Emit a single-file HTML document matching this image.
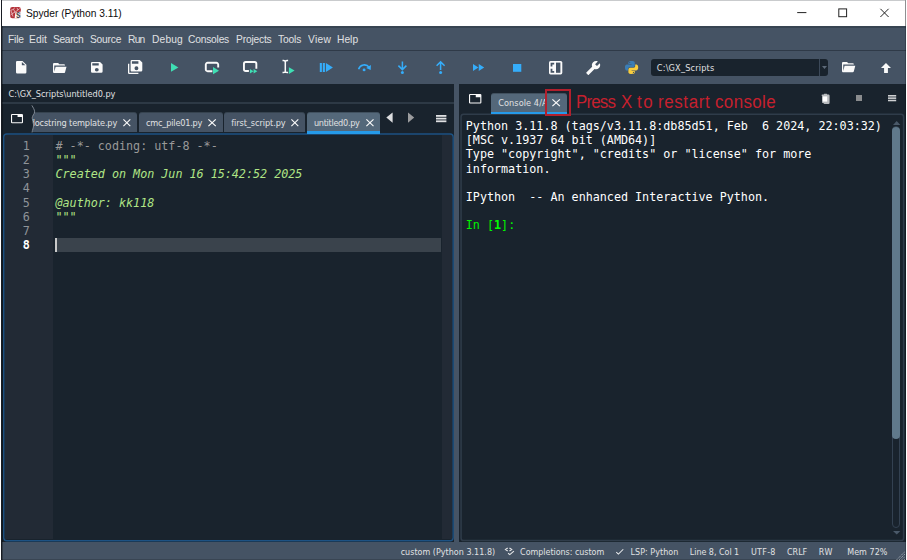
<!DOCTYPE html>
<html lang="en">
<head>
<meta charset="utf-8">
<title>Spyder (Python 3.11)</title>
<style>
*{box-sizing:border-box;margin:0;padding:0}
html,body{width:907px;height:560px;overflow:hidden;background:#19232d}
body{font-family:"Liberation Sans",sans-serif;color:#e0e1e3;font-size:11px}
#win{position:relative;width:907px;height:560px;overflow:hidden;background:#19232d}
#win div,#win svg,#win span.t{position:absolute}
#win section,#win nav,#win header,#win footer,#win main{display:block}
.t{white-space:pre}
.bg{left:0;top:0}
svg{overflow:visible}
.w{fill:#fafafa}
.g{fill:#3fdfb4}
.b{fill:#35adfa}
.tab{background:#455364;border-radius:3px 3px 0 0;border-top:1px solid #36434f;background-clip:border-box}
.tab.sel{background:#54687a;border-top-color:#41515f}
.tab.sel i{position:absolute;left:0;right:0;bottom:0;height:2.6px;background:#259ae9}
</style>
</head>
<body>
<div id="win">
<header id="titlebar">
<div style="left:0px;top:0px;width:907px;height:26px;background:#fff"></div>
<div style="left:2px;top:0px;width:903px;height:1px;background:#c9cbcd"></div>
<svg style="left:10px;top:7px;width:11px;height:11.4px" viewBox="0 0 11 11.4"><rect x="0.1" y="0.1" width="10.7" height="11.1" rx="2.2" fill="#b4323a"/><path d="M0.8 3.2L3.6 2.4L5 5.2L2 6.6ZM5 5.2L8 3M2 6.6L3 9.6M3.6 2.4L4.6 0.6M8 3L9.6 1.6M8 3L7 0.8M2 6.6L0.6 8.4" stroke="#efd0d2" stroke-width="0.75" fill="none"/><path d="M5.4 5.6L10.8 4.4V9.2Q10.8 11.2 8.6 11.2H4.6Z" fill="#fbf6f6"/></svg>
<div class="t" style='left:16.40px;top:6.70px;font:normal bold 11px/14px "Liberation Sans", sans-serif;color:#474747;transform:scaleX(0.74);transform-origin:0 0;'>s</div>
<div class="t" style='left:26.20px;top:5.90px;font:11px/14px "Liberation Sans", sans-serif;color:#0c0c0c;letter-spacing:-0.011px;transform:scaleX(0.93);transform-origin:0 0;'>Spyder (Python 3.11)</div>
<svg style="left:790px;top:4px;width:110px;height:18px" viewBox="0 0 110 18"><path d="M7.2 8.6H16.4" stroke="#222" stroke-width="1" fill="none"/><rect x="48.8" y="4.9" width="7.8" height="7.8" stroke="#222" stroke-width="1" fill="none"/><path d="M90.4 4.8L98.6 13M98.6 4.8L90.4 13" stroke="#222" stroke-width="1" fill="none"/></svg>
</header>
<nav id="menubar">
<div style="left:2px;top:26px;width:904px;height:25px;background:#455364;border-top:2px solid #374452;border-bottom:1px solid #2f3a48"></div>
<div class="t" style='left:7.70px;top:31.80px;font:11px/14px "Liberation Sans", sans-serif;color:#e0e1e3;letter-spacing:-0.170px;transform:scaleX(0.93);transform-origin:0 0;'>File</div>
<div class="t" style='left:29.40px;top:31.80px;font:11px/14px "Liberation Sans", sans-serif;color:#e0e1e3;letter-spacing:0.080px;transform:scaleX(0.93);transform-origin:0 0;'>Edit</div>
<div class="t" style='left:53.30px;top:31.80px;font:11px/14px "Liberation Sans", sans-serif;color:#e0e1e3;letter-spacing:-0.345px;transform:scaleX(0.93);transform-origin:0 0;'>Search</div>
<div class="t" style='left:90.00px;top:31.80px;font:11px/14px "Liberation Sans", sans-serif;color:#e0e1e3;letter-spacing:-0.216px;transform:scaleX(0.93);transform-origin:0 0;'>Source</div>
<div class="t" style='left:127.90px;top:31.80px;font:11px/14px "Liberation Sans", sans-serif;color:#e0e1e3;letter-spacing:-0.783px;transform:scaleX(0.93);transform-origin:0 0;'>Run</div>
<div class="t" style='left:151.50px;top:31.80px;font:11px/14px "Liberation Sans", sans-serif;color:#e0e1e3;letter-spacing:0.178px;transform:scaleX(0.93);transform-origin:0 0;'>Debug</div>
<div class="t" style='left:188.10px;top:31.80px;font:11px/14px "Liberation Sans", sans-serif;color:#e0e1e3;letter-spacing:-0.217px;transform:scaleX(0.93);transform-origin:0 0;'>Consoles</div>
<div class="t" style='left:236.00px;top:31.80px;font:11px/14px "Liberation Sans", sans-serif;color:#e0e1e3;letter-spacing:-0.187px;transform:scaleX(0.93);transform-origin:0 0;'>Projects</div>
<div class="t" style='left:278.40px;top:31.80px;font:11px/14px "Liberation Sans", sans-serif;color:#e0e1e3;letter-spacing:-0.147px;transform:scaleX(0.93);transform-origin:0 0;'>Tools</div>
<div class="t" style='left:308.10px;top:31.80px;font:11px/14px "Liberation Sans", sans-serif;color:#e0e1e3;letter-spacing:0.308px;transform:scaleX(0.93);transform-origin:0 0;'>View</div>
<div class="t" style='left:337.20px;top:31.80px;font:11px/14px "Liberation Sans", sans-serif;color:#e0e1e3;letter-spacing:0.025px;transform:scaleX(0.93);transform-origin:0 0;'>Help</div>
</nav>
<section id="toolbar">
<div style="left:2px;top:51px;width:904px;height:33px;background:#455364"></div>
<svg style="left:15.70px;top:61.30px;width:10.40px;height:12.40px" viewBox="4 2 16 20" preserveAspectRatio="none"><path class="w"  d="M13,9V3.5L18.5,9M6,2C4.89,2 4,2.89 4,4V20A2,2 0 0,0 6,22H18A2,2 0 0,0 20,20V8L14,2H6Z"/></svg>
<svg style="left:52.60px;top:62.50px;width:13.50px;height:10.10px" viewBox="2 4 21.21 16" preserveAspectRatio="none"><path class="w"  d="M19,20H4C2.89,20 2,19.1 2,18V6C2,4.89 2.89,4 4,4H10L12,6H19A2,2 0 0,1 21,8H21L4,8V18L6.14,10H23.21L20.93,18.5C20.7,19.37 19.92,20 19,20Z"/></svg>
<svg style="left:91.40px;top:62.20px;width:11.60px;height:10.70px" viewBox="3 3 18 18" preserveAspectRatio="none"><path class="w"  d="M15,9H5V5H15M12,19A3,3 0 0,1 9,16A3,3 0 0,1 12,13A3,3 0 0,1 15,16A3,3 0 0,1 12,19M17,3H5C3.89,3 3,3.9 3,5V19A2,2 0 0,0 5,21H19A2,2 0 0,0 21,19V7L17,3Z"/></svg>
<svg style="left:128.20px;top:60.20px;width:14.30px;height:14.00px" viewBox="1 1 22 22" preserveAspectRatio="none"><path class="w"  d="M17,7V3H7V7H17M14,17A3,3 0 0,0 17,14A3,3 0 0,0 14,11A3,3 0 0,0 11,14A3,3 0 0,0 14,17M19,1L23,5V17A2,2 0 0,1 21,19H7C5.89,19 5,18.1 5,17V3A2,2 0 0,1 7,1H19M1,7H3V21H17V23H3A2,2 0 0,1 1,21V7Z"/></svg>
<svg style="left:170.70px;top:63.30px;width:7.40px;height:8.80px" viewBox="8 5.14 11 14.0" preserveAspectRatio="none"><path class="g"  d="M8,5.14V19.14L19,12.14L8,5.14Z"/></svg>
<svg style="left:204px;top:61px;width:17px;height:15px" viewBox="0 0 17 15"><path d="M8.4 10.2H3.6a1.8 1.8 0 0 1-1.8-1.8V3.6a1.8 1.8 0 0 1 1.8-1.8h8.8a1.8 1.8 0 0 1 1.8 1.8V6.4" stroke="#fafafa" stroke-width="1.9" fill="none"/><path class="g" d="M9 6.1V13.2L15 9.65Z"/></svg>
<svg style="left:242px;top:60px;width:17px;height:15px" viewBox="0 0 17 15"><path d="M6.9 10.95H3.75a1.8 1.8 0 0 1-1.8-1.8V3.75a1.8 1.8 0 0 1 1.8-1.8h8.8a1.8 1.8 0 0 1 1.8 1.8V8.8" stroke="#fafafa" stroke-width="1.9" fill="none"/><path class="g" d="M7.9 8.9V13.5L11.5 11.2ZM11.6 8.9V13.5L15.3 11.2Z"/></svg>
<svg style="left:281px;top:59px;width:15px;height:16px" viewBox="0 0 15 16"><path d="M1.5 1.6H2.6Q4.3 1.6 4.3 3.2Q4.3 1.6 6 1.6H7.1M4.3 3V12.2M1.5 13.6H2.6Q4.3 13.6 4.3 12Q4.3 13.6 6 13.6H7.1" stroke="#fafafa" stroke-width="1.5" fill="none"/><path class="g" d="M7.9 8.2V15L13.6 11.6Z"/></svg>
<svg style="left:319px;top:63px;width:15px;height:9px" viewBox="0 0 15 9"><path class="b" d="M0.8 -0.1H2.9V8.9H0.8ZM3.8 -0.1H5.9V8.9H3.8ZM6.9 -0.1L13.9 4.4L6.9 8.9Z"/></svg>
<svg style="left:357px;top:62px;width:15px;height:11px" viewBox="0 0 15 11"><path d="M1.6 7.2A6 6 0 0 1 12.2 5.4" stroke="#35adfa" stroke-width="1.6" fill="none"/><path class="b" d="M13.9 3.0L13.7 8.0L9.2 6.1Z"/><circle class="b" cx="7.1" cy="7.9" r="1.45"/></svg>
<svg style="left:397px;top:60.5px;width:11px;height:14px" viewBox="0 0 11 14"><path d="M5.4 0.4V8.4M1.4 4.6L5.4 8.6L9.4 4.6" stroke="#35adfa" stroke-width="1.5" fill="none"/><circle class="b" cx="5.4" cy="11.5" r="1.5"/></svg>
<svg style="left:435px;top:60.5px;width:11px;height:14px" viewBox="0 0 11 14"><path d="M5.6 9V1.2M1.6 4.8L5.6 0.9L9.6 4.8" stroke="#35adfa" stroke-width="1.5" fill="none"/><circle class="b" cx="5.6" cy="11.5" r="1.5"/></svg>
<svg style="left:473.20px;top:64.00px;width:11.20px;height:7.10px" viewBox="4 6 17.5 12" preserveAspectRatio="none"><path class="b"  d="M13,6V18L21.5,12M4,18L12.5,12L4,6V18Z"/></svg>
<svg style="left:512.80px;top:63.60px;width:8.30px;height:7.80px" viewBox="6 6 12 12" preserveAspectRatio="none"><path class="b"  d="M18,18H6V6H18V18Z"/></svg>
<svg style="left:548.6px;top:60.7px;width:13.4px;height:13.5px" viewBox="0 0 13.4 13.5"><rect x="0" y="0" width="13.3" height="13.4" rx="1.6" fill="#fafafa"/><rect x="7.0" y="1.6" width="4.4" height="10.2" fill="#455364"/><path d="M1.6 1.7H5.2V3.5H3.4V5.6H1.6ZM1.6 11.7H5.2V9.9H3.4V7.8H1.6Z" fill="#455364"/></svg>
<svg style="left:586.0px;top:60.7px;width:14.4px;height:14.0px" viewBox="0.9 1 22.1 22"><path class="w" transform="translate(23.9 0) scale(-1 1)" d="M22.7,19L13.6,9.9C14.5,7.6 14,4.9 12.1,3C10.1,1 7.1,0.6 4.7,1.7L9,6L6,9L1.6,4.7C0.4,7.1 0.9,10.1 2.9,12.1C4.8,14 7.5,14.5 9.8,13.6L18.9,22.7C19.3,23.1 19.9,23.1 20.3,22.7L22.6,20.4C23.1,20 23.1,19.3 22.7,19Z"/></svg>
<svg style="left:624.8px;top:61.2px;width:13.2px;height:13px" viewBox="0 0 13.2 13"><path fill="#3b7db5" d="M6.5 0C3.4 0 3.4 1.4 3.4 1.4V3.1H6.6V3.6H2.1S0 3.4 0 6.5 1.8 9.6 1.8 9.6H3V8S2.9 6.2 4.8 6.2H8S9.8 6.2 9.8 4.5V1.7S10 0 6.5 0Z"/><path fill="#f7cd3e" d="M6.7 13C9.8 13 9.8 11.6 9.8 11.6V9.9H6.6V9.4H11.1S13.2 9.6 13.2 6.5 11.4 3.4 11.4 3.4H10.2V5S10.3 6.8 8.4 6.8H5.2S3.4 6.8 3.4 8.5V11.3S3.2 13 6.7 13Z"/><circle cx="4.7" cy="1.6" r="0.6" fill="#455364"/><circle cx="8.5" cy="11.4" r="0.6" fill="#455364"/></svg>
<div style="left:651px;top:59px;width:177px;height:17px;background:#19232d;border-radius:3px"></div>
<div style="left:819px;top:59px;width:1px;height:17px;background:#3c4959"></div>
<svg style="left:821.5px;top:65.5px;width:5px;height:3px" viewBox="0 0 5 3"><path d="M0 0H5L2.5 3Z" fill="#5d6a79"/></svg>
<div class="t" style='left:656.80px;top:62.00px;font:9.1px/12px "DejaVu Sans Condensed", "Liberation Sans", sans-serif;color:#e0e1e3;letter-spacing:0.184px;'>C:\GX_Scripts</div>
<svg style="left:841.70px;top:62.30px;width:13.30px;height:10.30px" viewBox="2 4 21.21 16" preserveAspectRatio="none"><path class="w"  d="M19,20H4C2.89,20 2,19.1 2,18V6C2,4.89 2.89,4 4,4H10L12,6H19A2,2 0 0,1 21,8H21L4,8V18L6.14,10H23.21L20.93,18.5C20.7,19.37 19.92,20 19,20Z"/></svg>
<svg style="left:881.00px;top:62.70px;width:10.00px;height:9.90px" viewBox="4.16 4.16 15.68 15.84" preserveAspectRatio="none"><path class="w"  d="M15,20H9V12H4.16L12,4.16L19.84,12H15V20Z"/></svg>
</section>
<main id="editorpane">
<div class="t" style='left:8.60px;top:88.30px;font:9.1px/12px "DejaVu Sans Condensed", "Liberation Sans", sans-serif;color:#e0e1e3;letter-spacing:-0.023px;'>C:\GX_Scripts\untitled0.py</div>
<div style="left:2px;top:102px;width:453px;height:2px;background:#2d3945"></div>
<div style="left:5px;top:135px;width:48px;height:404px;background:#222a35"></div>
<div style="left:442px;top:135px;width:10px;height:404px;background:#222a35"></div>
<div style="left:55px;top:238px;width:386px;height:14px;background:#3a434c"></div>
<svg style="left:0px;top:130px;width:457px;height:414px" viewBox="0 0 457 414"><rect x="3.75" y="4.05" width="449.4" height="406.7" rx="3" stroke="#1d5283" stroke-width="1.4" fill="none"/></svg>
<svg style="left:11.10px;top:113.60px;width:12.00px;height:9.30px" viewBox="1 3 22 18" preserveAspectRatio="none"><path class="w"  d="M21,3H3A2,2 0 0,0 1,5V19A2,2 0 0,0 3,21H21A2,2 0 0,0 23,19V5A2,2 0 0,0 21,3M21,19H3V5H13V9H21V19Z"/></svg>
<div style="left:33px;top:108px;width:348px;height:27px;overflow:hidden"><div style="left:-33px;top:-108px;width:1px;height:1px">
<div class="tab" style="left:20px;top:112px;width:117px;height:20px;"></div>
<div class="t" style='left:29.70px;top:116.90px;font:9.1px/12px "DejaVu Sans Condensed", "Liberation Sans", sans-serif;color:#e0e1e3;letter-spacing:-0.140px;'>docstring template.py</div>
<svg style="left:122.80px;top:118.80px;width:7.70px;height:7.40px" viewBox="5 5 14 14" preserveAspectRatio="none"><path class="w"  d="M19,6.41L17.59,5L12,10.59L6.41,5L5,6.41L10.59,12L5,17.59L6.41,19L12,13.41L17.59,19L19,17.59L13.41,12L19,6.41Z"/></svg>
<div class="tab" style="left:139px;top:112px;width:84px;height:20px;"></div>
<div class="t" style='left:146.00px;top:116.90px;font:9.1px/12px "DejaVu Sans Condensed", "Liberation Sans", sans-serif;color:#e0e1e3;letter-spacing:-0.203px;'>cmc_pile01.py</div>
<svg style="left:207.90px;top:118.80px;width:8.20px;height:7.40px" viewBox="5 5 14 14" preserveAspectRatio="none"><path class="w"  d="M19,6.41L17.59,5L12,10.59L6.41,5L5,6.41L10.59,12L5,17.59L6.41,19L12,13.41L17.59,19L19,17.59L13.41,12L19,6.41Z"/></svg>
<div class="tab" style="left:224px;top:112px;width:81px;height:20px;"></div>
<div class="t" style='left:231.20px;top:116.90px;font:9.1px/12px "DejaVu Sans Condensed", "Liberation Sans", sans-serif;color:#e0e1e3;letter-spacing:-0.076px;'>first_script.py</div>
<svg style="left:291.00px;top:118.80px;width:7.70px;height:7.40px" viewBox="5 5 14 14" preserveAspectRatio="none"><path class="w"  d="M19,6.41L17.59,5L12,10.59L6.41,5L5,6.41L10.59,12L5,17.59L6.41,19L12,13.41L17.59,19L19,17.59L13.41,12L19,6.41Z"/></svg>
<div class="tab sel" style="left:307px;top:112px;width:73px;height:22px;"><i></i></div>
<div class="t" style='left:313.90px;top:116.90px;font:9.1px/12px "DejaVu Sans Condensed", "Liberation Sans", sans-serif;color:#e0e1e3;letter-spacing:-0.305px;'>untitled0.py</div>
<svg style="left:365.70px;top:118.80px;width:7.90px;height:7.40px" viewBox="5 5 14 14" preserveAspectRatio="none"><path class="w"  d="M19,6.41L17.59,5L12,10.59L6.41,5L5,6.41L10.59,12L5,17.59L6.41,19L12,13.41L17.59,19L19,17.59L13.41,12L19,6.41Z"/></svg>
</div></div>
<svg style="left:28px;top:104px;width:8px;height:30px" viewBox="0 0 8 30"><path d="M0 1H3.9C5 3.5 6.6 5.5 6.6 7.8C6.6 10 4.2 11.5 4.2 14C4.2 16.5 5.6 18.5 5.6 21C5.6 24 4.2 26 4.1 29H0Z" fill="#19232d"/><path d="M3.9 1.4C5 3.5 6.6 5.5 6.6 7.8C6.6 10 4.2 11.5 4.2 14C4.2 16.5 5.6 18.5 5.6 21C5.6 24 4.2 26 4.1 28.4" stroke="#8a939e" stroke-width="0.9" fill="none"/></svg>
<svg style="left:386px;top:112px;width:30px;height:12px" viewBox="0 0 30 12"><path d="M0.3 5.6L6.6 0.4V10.8Z" fill="#dcdddf"/><path d="M28.2 5.6L22 0.4V10.8Z" fill="#9b9c9e"/></svg>
<svg style="left:436.3px;top:114.9px;width:10.4px;height:7.2px" viewBox="0 0 10.4 7.2"><rect x="0" y="0.00" width="10.40" height="1.80" fill="#dfe0e2"/><rect x="0" y="2.70" width="10.40" height="1.80" fill="#dfe0e2"/><rect x="0" y="5.40" width="10.40" height="1.80" fill="#dfe0e2"/></svg>
<div class="t" style='left:22.75px;top:139.10px;font:11.74px/15px "DejaVu Sans Mono", "Liberation Mono", monospace;color:#8f9499;'>1</div>
<div class="t" style='left:55.50px;top:139.10px;font:11.74px/15px "DejaVu Sans Mono", "Liberation Mono", monospace;color:#999999;letter-spacing:-0.012px;'># -*- coding: utf-8 -*-</div>
<div class="t" style='left:22.75px;top:153.10px;font:11.74px/15px "DejaVu Sans Mono", "Liberation Mono", monospace;color:#8f9499;'>2</div>
<div class="t" style='left:55.50px;top:153.10px;font:italic normal 11.74px/15px "DejaVu Sans Mono", "Liberation Mono", monospace;color:#b0e686;letter-spacing:-0.012px;'>"""</div>
<div class="t" style='left:22.75px;top:167.10px;font:11.74px/15px "DejaVu Sans Mono", "Liberation Mono", monospace;color:#8f9499;'>3</div>
<div class="t" style='left:55.50px;top:167.10px;font:italic normal 11.74px/15px "DejaVu Sans Mono", "Liberation Mono", monospace;color:#b0e686;letter-spacing:-0.012px;'>Created on Mon Jun 16 15:42:52 2025</div>
<div class="t" style='left:22.75px;top:181.10px;font:11.74px/15px "DejaVu Sans Mono", "Liberation Mono", monospace;color:#8f9499;'>4</div>
<div class="t" style='left:22.75px;top:196.10px;font:11.74px/15px "DejaVu Sans Mono", "Liberation Mono", monospace;color:#8f9499;'>5</div>
<div class="t" style='left:55.50px;top:196.10px;font:italic normal 11.74px/15px "DejaVu Sans Mono", "Liberation Mono", monospace;color:#b0e686;letter-spacing:-0.012px;'>@author: kk118</div>
<div class="t" style='left:22.75px;top:210.10px;font:11.74px/15px "DejaVu Sans Mono", "Liberation Mono", monospace;color:#8f9499;'>6</div>
<div class="t" style='left:55.50px;top:210.10px;font:italic normal 11.74px/15px "DejaVu Sans Mono", "Liberation Mono", monospace;color:#b0e686;letter-spacing:-0.012px;'>"""</div>
<div class="t" style='left:22.75px;top:224.10px;font:11.74px/15px "DejaVu Sans Mono", "Liberation Mono", monospace;color:#8f9499;'>7</div>
<div class="t" style='left:22.75px;top:238.10px;font:normal bold 11.74px/15px "DejaVu Sans Mono", "Liberation Mono", monospace;color:#ffffff;'>8</div>
<div style="left:55px;top:238px;width:2px;height:14px;background:#c9c9c9"></div>
</main>
<div style="left:454px;top:84px;width:5px;height:457.6px;background:#465465"></div>
<section id="consolepane">
<svg style="left:458px;top:110px;width:449px;height:434px" viewBox="0 0 449 434"><rect x="3.05" y="4.35" width="442.55" height="426.25" rx="2.6" stroke="#2f3c4a" stroke-width="1.5" fill="none"/></svg>
<svg style="left:468.60px;top:93.70px;width:12.40px;height:9.60px" viewBox="1 3 22 18" preserveAspectRatio="none"><path class="w"  d="M21,3H3A2,2 0 0,0 1,5V19A2,2 0 0,0 3,21H21A2,2 0 0,0 23,19V5A2,2 0 0,0 21,3M21,19H3V5H13V9H21V19Z"/></svg>
<div class="tab sel" style="left:491px;top:93px;width:76px;height:21px;"><i style="height:2.4px"></i></div>
<div class="t" style='left:498.20px;top:97.00px;font:9.1px/12px "DejaVu Sans Condensed", "Liberation Sans", sans-serif;color:#e0e1e3;letter-spacing:0.076px;width:47.3px;overflow:hidden;'>Console 4/A</div>
<svg style="left:551.70px;top:98.90px;width:8.30px;height:7.40px" viewBox="5 5 14 14" preserveAspectRatio="none"><path class="w"  d="M19,6.41L17.59,5L12,10.59L6.41,5L5,6.41L10.59,12L5,17.59L6.41,19L12,13.41L17.59,19L19,17.59L13.41,12L19,6.41Z"/></svg>
<div style="left:576px;top:90px;width:202px;height:24px">
<span class="t" style='left:-0.04px;top:0.70px;font:18px/23px "Liberation Sans", sans-serif;color:#c6202e;letter-spacing:-0.880px;transform:scaleX(0.94);transform-origin:0 0;'>Press </span>
<span class="t" style='left:45.40px;top:0.70px;font:18px/23px "Liberation Sans", sans-serif;color:#c6202e;transform:scaleX(0.94);transform-origin:0 0;'>X </span>
<span class="t" style='left:60.70px;top:0.70px;font:18px/23px "Liberation Sans", sans-serif;color:#c6202e;letter-spacing:1.595px;transform:scaleX(0.94);transform-origin:0 0;'>to </span>
<span class="t" style='left:81.56px;top:0.70px;font:18px/23px "Liberation Sans", sans-serif;color:#c6202e;letter-spacing:0.654px;transform:scaleX(0.94);transform-origin:0 0;'>restart </span>
<span class="t" style='left:138.50px;top:0.70px;font:18px/23px "Liberation Sans", sans-serif;color:#c6202e;letter-spacing:0.406px;transform:scaleX(0.94);transform-origin:0 0;'>console</span>
</div>
<svg style="left:821px;top:92.5px;width:9.5px;height:11.5px" viewBox="0 0 9.5 11.5"><path d="M3.2 0.7H5.8L6.3 1.4H8L8.6 2.6V9.8Q8.6 11 7.4 11H3.6Q2.6 11 2.4 10H1.2V3H0.7V1.8L1.4 1.4H2.7Z" fill="#b7babd"/><rect x="1.6" y="3.4" width="4.6" height="5.2" fill="#ffffff"/></svg>
<div style="left:856.2px;top:95.4px;width:5.699999999999932px;height:5.599999999999994px;background:#8a8c8e"></div>
<svg style="left:887.9px;top:94.9px;width:8.2px;height:6.3px" viewBox="0 0 8.2 6.3"><rect x="0" y="0.00" width="8.20" height="1.57" fill="#cfd0d2"/><rect x="0" y="2.36" width="8.20" height="1.57" fill="#cfd0d2"/><rect x="0" y="4.72" width="8.20" height="1.57" fill="#cfd0d2"/></svg>
<div style="left:545.1px;top:89.1px;width:26.199999999999932px;height:26.900000000000006px;border:2px solid #b2202d"></div>
<div class="t" style='left:465.80px;top:119.30px;font:11.74px/15px "DejaVu Sans Mono", "Liberation Mono", monospace;color:#ffffff;letter-spacing:-0.012px;'>Python 3.11.8 (tags/v3.11.8:db85d51, Feb  6 2024, 22:03:32)</div>
<div class="t" style='left:465.80px;top:133.37px;font:11.74px/15px "DejaVu Sans Mono", "Liberation Mono", monospace;color:#ffffff;letter-spacing:-0.012px;'>[MSC v.1937 64 bit (AMD64)]</div>
<div class="t" style='left:465.80px;top:147.44px;font:11.74px/15px "DejaVu Sans Mono", "Liberation Mono", monospace;color:#ffffff;letter-spacing:-0.012px;'>Type "copyright", "credits" or "license" for more</div>
<div class="t" style='left:465.80px;top:161.51px;font:11.74px/15px "DejaVu Sans Mono", "Liberation Mono", monospace;color:#ffffff;letter-spacing:-0.012px;'>information.</div>
<div class="t" style='left:465.80px;top:189.65px;font:11.74px/15px "DejaVu Sans Mono", "Liberation Mono", monospace;color:#ffffff;letter-spacing:-0.012px;'>IPython  -- An enhanced Interactive Python.</div>
<div class="t" style='left:465.80px;top:217.79px;font:11.74px/15px "DejaVu Sans Mono", "Liberation Mono", monospace;color:#00f400;letter-spacing:-0.012px;'>In [<b style="color:#00ff00">1</b>]:</div>
<div style="left:892px;top:126px;width:8px;height:402px;border:1px solid #334151;border-radius:4px"></div>
<div style="left:892.2px;top:127.2px;width:7.599999999999909px;height:311.8px;background:#60798b;border-radius:4px"></div>
<svg style="left:892.5px;top:120.5px;width:8px;height:4px" viewBox="0 0 8 4"><path d="M0 4L3.7 0L7.4 4Z" fill="#4a5969"/></svg>
<svg style="left:892.5px;top:531px;width:8px;height:4px" viewBox="0 0 8 4"><path d="M0 0L3.7 3.6L7.4 0Z" fill="#4a5969"/></svg>
</section>
<footer id="statusbar">
<div style="left:2px;top:541.7px;width:904px;height:18.299999999999955px;background:#455364"></div>
<div class="t" style='left:400.70px;top:545.60px;font:8.9px/12px "DejaVu Sans Condensed", "Liberation Sans", sans-serif;color:#e0e1e3;letter-spacing:0.031px;'>custom (Python 3.11.8)</div>
<div class="t" style='left:520.10px;top:545.60px;font:8.9px/12px "DejaVu Sans Condensed", "Liberation Sans", sans-serif;color:#e0e1e3;letter-spacing:-0.025px;'>Completions: custom</div>
<div class="t" style='left:630.50px;top:545.60px;font:8.9px/12px "DejaVu Sans Condensed", "Liberation Sans", sans-serif;color:#e0e1e3;letter-spacing:0.063px;'>LSP: Python</div>
<div class="t" style='left:689.80px;top:545.60px;font:8.9px/12px "DejaVu Sans Condensed", "Liberation Sans", sans-serif;color:#e0e1e3;letter-spacing:-0.020px;'>Line 8, Col 1</div>
<div class="t" style='left:751.00px;top:545.60px;font:8.9px/12px "DejaVu Sans Condensed", "Liberation Sans", sans-serif;color:#e0e1e3;letter-spacing:0.276px;'>UTF-8</div>
<div class="t" style='left:787.00px;top:545.60px;font:8.9px/12px "DejaVu Sans Condensed", "Liberation Sans", sans-serif;color:#e0e1e3;letter-spacing:0.010px;'>CRLF</div>
<div class="t" style='left:818.80px;top:545.60px;font:8.9px/12px "DejaVu Sans Condensed", "Liberation Sans", sans-serif;color:#e0e1e3;letter-spacing:0.613px;'>RW</div>
<div class="t" style='left:847.20px;top:545.60px;font:8.9px/12px "DejaVu Sans Condensed", "Liberation Sans", sans-serif;color:#e0e1e3;letter-spacing:0.054px;'>Mem 72%</div>
<svg style="left:505px;top:547px;width:10px;height:9px" viewBox="0 0 10 9"><path d="M2.7 1L0.5 2.5L2.7 4M4.5 1L6.7 2.5L4.5 4M3.1 6.2L4.8 7.6L8.9 4.1" stroke="#e6e7e9" stroke-width="1.15" fill="none"/></svg>
<svg style="left:616.00px;top:548.60px;width:7.60px;height:5.80px" viewBox="3.5 5.59 17.5 13.41" preserveAspectRatio="none"><path class="w"  d="M21,7L9,19L3.5,13.5L4.91,12.09L9,16.17L19.59,5.59L21,7Z"/></svg>
<svg style="left:896px;top:551px;width:9px;height:9px" viewBox="0 0 9 9"><path d="M0.5 9L9 0.5M3 9L9 3M5.5 9L9 5.5M8 9L9 8" stroke="#aab2bb" stroke-width="1" stroke-dasharray="1.3 1" fill="none"/></svg>
</footer>
<div style="left:0px;top:0px;width:1px;height:560px;background:#fff"></div>
<div style="left:1px;top:0px;width:1px;height:560px;background:#181c23"></div>
<div style="left:2px;top:26px;width:1px;height:534px;background:rgba(0,0,0,0.3)"></div>
<div style="left:2px;top:559px;width:904px;height:1px;background:rgba(0,0,0,0.16)"></div>
<div style="left:905px;top:0px;width:1px;height:26px;background:#8f9092"></div>
<div style="left:905px;top:26px;width:1px;height:534px;background:rgba(0,0,0,0.22)"></div>
<div style="left:906px;top:0px;width:1px;height:560px;background:#fff"></div>
</div>
</body>
</html>
